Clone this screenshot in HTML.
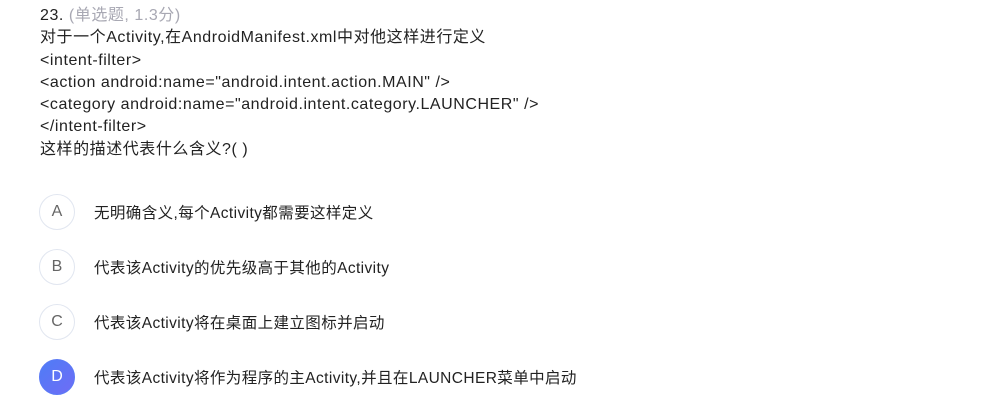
<!DOCTYPE html>
<html><head><meta charset="utf-8"><style>
body{margin:0;background:#fff;font-family:"Liberation Sans","Noto Sans CJK SC",sans-serif;color:#222;font-size:16px;}
.q{position:absolute;left:40px;top:5px;line-height:22.3px;letter-spacing:0.55px;}
.g{color:#a8a8b3;}
.opt{position:absolute;left:39px;height:36px;display:flex;align-items:center;}
.c{width:34px;height:34px;border:1px solid #e1e6f0;border-radius:50%;display:flex;align-items:center;justify-content:center;color:#666;font-size:16px;box-sizing:content-box;}
.c.s{background:linear-gradient(135deg,#4e7df7,#6f6cf5);border-color:#5b7af6;color:#fff;}
.t{margin-left:19px;font-size:15.5px;color:#222;letter-spacing:0.4px;}
</style></head><body>
<div class="q">23. <span class="g">(单选题, 1.3分)</span><br>对于一个Activity,在AndroidManifest.xml中对他这样进行定义<br>&lt;intent-filter&gt;<br>&lt;action android:name="android.intent.action.MAIN" /&gt;<br>&lt;category android:name="android.intent.category.LAUNCHER" /&gt;<br>&lt;/intent-filter&gt;<br>这样的描述代表什么含义?( )</div>
<div class="opt" style="top:194px"><div class="c">A</div><div class="t">无明确含义,每个Activity都需要这样定义</div></div>
<div class="opt" style="top:249px"><div class="c">B</div><div class="t">代表该Activity的优先级高于其他的Activity</div></div>
<div class="opt" style="top:304px"><div class="c">C</div><div class="t">代表该Activity将在桌面上建立图标并启动</div></div>
<div class="opt" style="top:359px"><div class="c s">D</div><div class="t">代表该Activity将作为程序的主Activity,并且在LAUNCHER菜单中启动</div></div>
</body></html>
